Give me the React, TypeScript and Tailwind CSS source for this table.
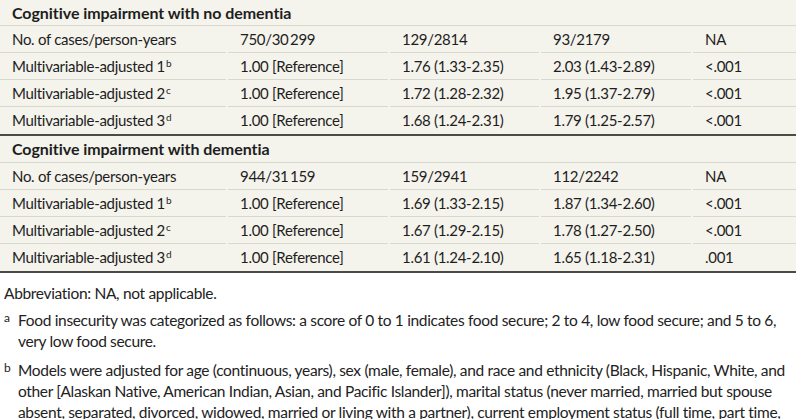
import React from "react";

type Row = { label: string; sup?: string; c1: string; c2: string; c3: string; p: string };

const sections: { title: string; rows: Row[] }[] = [
  {
    title: "Cognitive impairment with no dementia",
    rows: [
      { label: "No. of cases/person-years", c1: "750/30\u2009299", c2: "129/2814", c3: "93/2179", p: "NA" },
      { label: "Multivariable-adjusted 1", sup: "b", c1: "1.00 [Reference]", c2: "1.76 (1.33-2.35)", c3: "2.03 (1.43-2.89)", p: "<.001" },
      { label: "Multivariable-adjusted 2", sup: "c", c1: "1.00 [Reference]", c2: "1.72 (1.28-2.32)", c3: "1.95 (1.37-2.79)", p: "<.001" },
      { label: "Multivariable-adjusted 3", sup: "d", c1: "1.00 [Reference]", c2: "1.68 (1.24-2.31)", c3: "1.79 (1.25-2.57)", p: "<.001" },
    ],
  },
  {
    title: "Cognitive impairment with dementia",
    rows: [
      { label: "No. of cases/person-years", c1: "944/31\u2009159", c2: "159/2941", c3: "112/2242", p: "NA" },
      { label: "Multivariable-adjusted 1", sup: "b", c1: "1.00 [Reference]", c2: "1.69 (1.33-2.15)", c3: "1.87 (1.34-2.60)", p: "<.001" },
      { label: "Multivariable-adjusted 2", sup: "c", c1: "1.00 [Reference]", c2: "1.67 (1.29-2.15)", c3: "1.78 (1.27-2.50)", p: "<.001" },
      { label: "Multivariable-adjusted 3", sup: "d", c1: "1.00 [Reference]", c2: "1.61 (1.24-2.10)", c3: "1.65 (1.18-2.31)", p: ".001" },
    ],
  },
];

const cols = "grid grid-cols-[226px_160px_149px_150px_1fr] gap-x-[2px]";

function Section({ title, rows, first }: { title: string; rows: Row[]; first: boolean }) {
  return (
    <div className="border-b-2 border-[#4a4a48]">
      <div
        className={`${first ? "h-[26px]" : "h-[27px]"} flex items-center border-b border-[#d9d8cf] px-3 text-[16px] font-bold tracking-[-0.05px]`}
      >
        {title}
      </div>
      {rows.map((r, i) => (
        <div key={r.label + i} className={`${cols} h-[27px]`}>
          {[
            <span key="l">
              {r.label}
              {r.sup && <sup className="ml-[1px] text-[10px] tracking-normal">{r.sup}</sup>}
            </span>,
            r.c1,
            r.c2,
            r.c3,
            r.p,
          ].map((c, j) => (
            <div
              key={j}
              className={`flex items-center pl-3 ${i < rows.length - 1 ? "border-b border-[#d9d8cf]" : ""}`}
            >
              {c}
            </div>
          ))}
        </div>
      ))}
    </div>
  );
}

export default function App() {
  return (
    <div className="w-[800px] h-[419px] overflow-hidden bg-white text-[#1e1e1e]">
      <div className="w-[796px] bg-[#f4f3ec] text-[15px] tracking-[-0.3px] font-['Lato',sans-serif] leading-none">
        {sections.map((s, i) => (
          <Section key={s.title} title={s.title} rows={s.rows} first={i === 0} />
        ))}
      </div>
      <div className="px-1 pt-[10px] text-[15.5px] tracking-[-0.33px] leading-[21px] font-['Lato',sans-serif] text-[#222]">
        <p>Abbreviation: NA, not applicable.</p>
        <div className="mt-[6px] flex">
          <span className="w-[14px] shrink-0 pt-[1px] text-[12px] leading-[14px] tracking-normal">a</span>
          <p>
            Food insecurity was categorized as follows: a score of 0 to 1 indicates food secure; 2 to 4, low food
            secure; and 5 to 6, very low food secure.
          </p>
        </div>
        <div className="mt-[8px] flex">
          <span className="w-[14px] shrink-0 pt-[1px] text-[12px] leading-[14px] tracking-normal">b</span>
          <p>
            Models were adjusted for age (continuous, years), sex (male, female), and race and ethnicity (Black,
            Hispanic, White, and other [Alaskan Native, American Indian, Asian, and Pacific Islander]), marital status
            (never married, married but spouse absent, separated, divorced, widowed, married or living with a partner),
            current employment status (full time, part time, not working).
          </p>
        </div>
      </div>
    </div>
  );
}
